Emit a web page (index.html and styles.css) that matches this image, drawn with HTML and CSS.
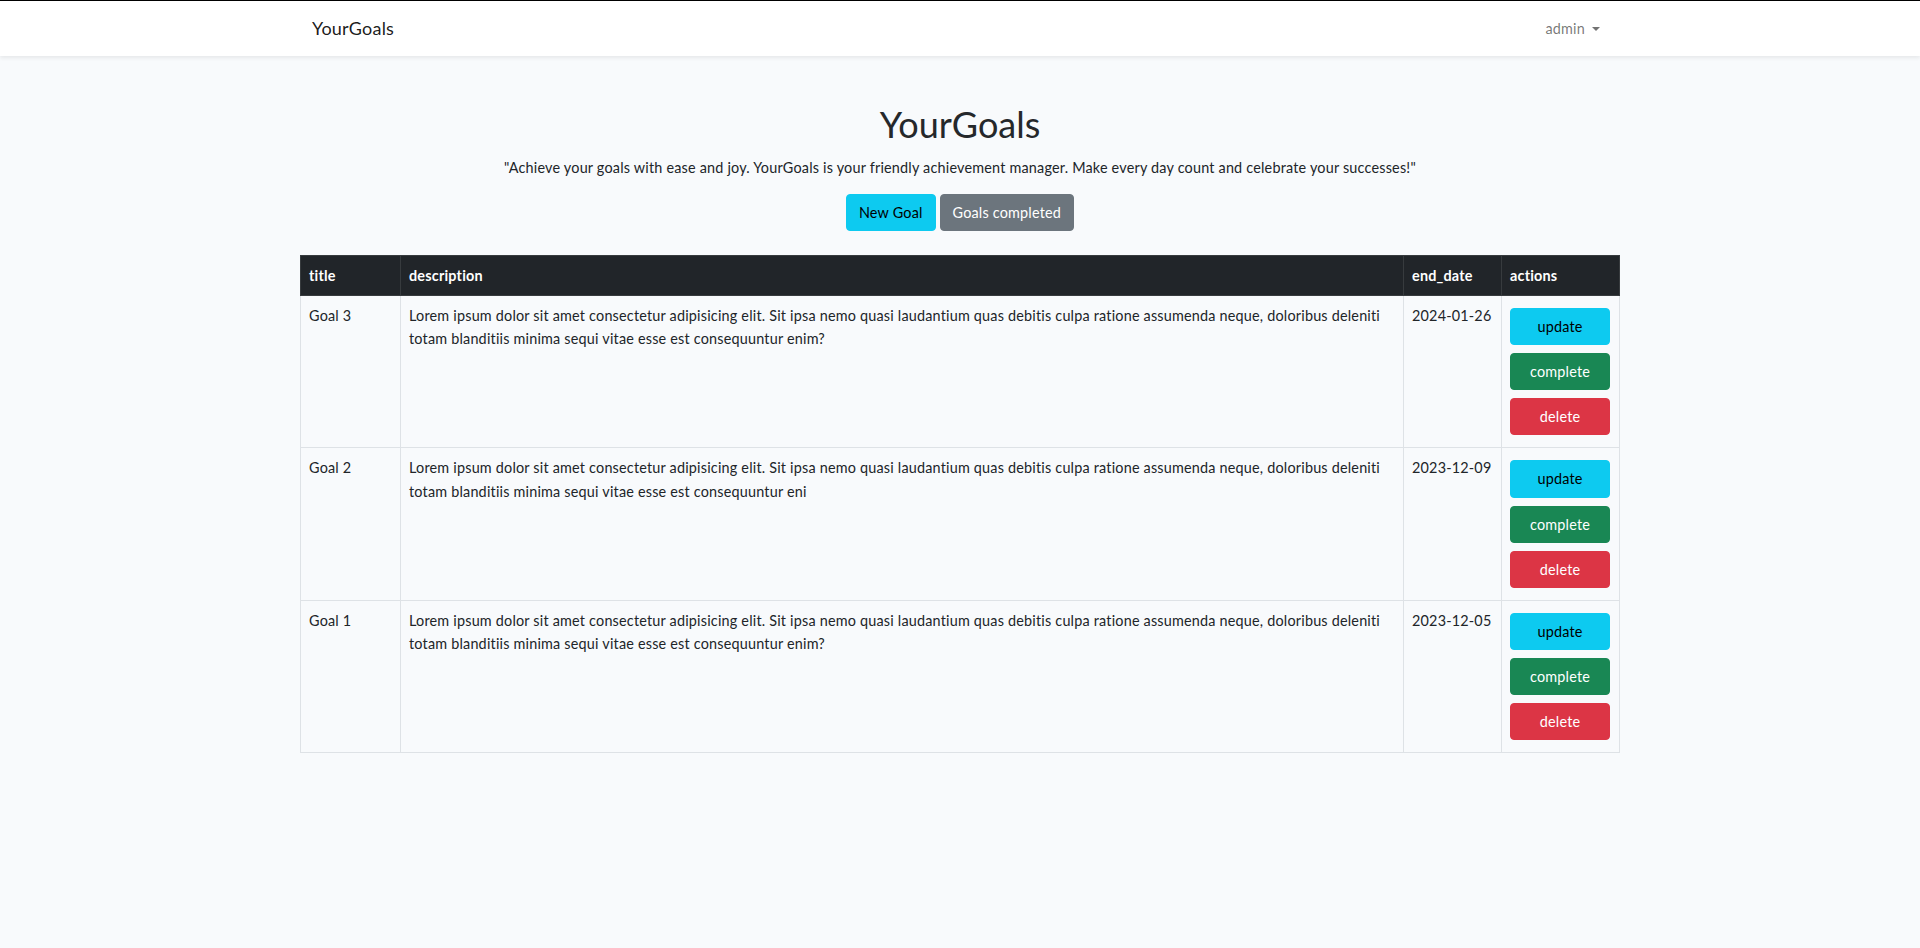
FILE: index.html
```html
<!DOCTYPE html>
<html lang="en">
<head>
<meta charset="utf-8">
<title>YourGoals</title>
<link rel="stylesheet" href="styles.css">
</head>
<body>
<nav class="navbar">
  <div class="container nav-inner">
    <a class="brand" href="#">YourGoals</a>
    <a class="user-menu" href="#">admin <span class="caret"></span></a>
  </div>
</nav>
<main class="container main">
  <header class="hero">
    <h1 class="hero-title">YourGoals</h1>
    <p class="hero-text">"Achieve your goals with ease and joy. YourGoals is your friendly achievement manager. Make every day count and celebrate your successes!"</p>
    <div class="hero-actions">
      <a class="btn btn-info" href="#">New Goal</a>
      <a class="btn btn-secondary" href="#">Goals completed</a>
    </div>
  </header>
  <table class="goals">
    <colgroup>
      <col class="col-title">
      <col class="col-desc">
      <col class="col-date">
      <col class="col-actions">
    </colgroup>
    <thead>
      <tr><th>title</th><th>description</th><th>end_date</th><th>actions</th></tr>
    </thead>
    <tbody>
      <tr>
        <td>Goal 3</td>
        <td>Lorem ipsum dolor sit amet consectetur adipisicing elit. Sit ipsa nemo quasi laudantium quas debitis culpa ratione assumenda neque, doloribus deleniti totam blanditiis minima sequi vitae esse est consequuntur enim?</td>
        <td>2024-01-26</td>
        <td>
          <div class="action-stack">
            <a class="btn btn-info" href="#">update</a>
            <a class="btn btn-success" href="#">complete</a>
            <a class="btn btn-danger" href="#">delete</a>
          </div>
        </td>
      </tr>
      <tr>
        <td>Goal 2</td>
        <td>Lorem ipsum dolor sit amet consectetur adipisicing elit. Sit ipsa nemo quasi laudantium quas debitis culpa ratione assumenda neque, doloribus deleniti totam blanditiis minima sequi vitae esse est consequuntur eni</td>
        <td>2023-12-09</td>
        <td>
          <div class="action-stack">
            <a class="btn btn-info" href="#">update</a>
            <a class="btn btn-success" href="#">complete</a>
            <a class="btn btn-danger" href="#">delete</a>
          </div>
        </td>
      </tr>
      <tr>
        <td>Goal 1</td>
        <td>Lorem ipsum dolor sit amet consectetur adipisicing elit. Sit ipsa nemo quasi laudantium quas debitis culpa ratione assumenda neque, doloribus deleniti totam blanditiis minima sequi vitae esse est consequuntur enim?</td>
        <td>2023-12-05</td>
        <td>
          <div class="action-stack">
            <a class="btn btn-info" href="#">update</a>
            <a class="btn btn-success" href="#">complete</a>
            <a class="btn btn-danger" href="#">delete</a>
          </div>
        </td>
      </tr>
    </tbody>
  </table>
</main>
</body>
</html>
```
FILE: styles.css
```css
* { box-sizing: border-box; }
html, body { margin: 0; padding: 0; }
body {
  background: #f8fafc;
  color: #212529;
  font-family: "Lato", "Noto Sans", sans-serif;
  font-size: 14.4px;
  line-height: 1.6;
  letter-spacing: 0.2px;
  min-height: 948px;
}
a { text-decoration: none; }
.container {
  width: 1320px;
  margin: 0 auto;
  padding: 0 12px;
}
.navbar {
  background: #fff;
  border-top: 1px solid #000;
  height: 56px;
  box-shadow: 0 2px 4px rgba(0,0,0,.075);
}
.nav-inner {
  height: 55px;
  display: flex;
  align-items: center;
  justify-content: space-between;
}
.brand {
  color: rgba(0,0,0,.9);
  font-size: 18px;
}
.user-menu {
  color: rgba(0,0,0,.55);
  padding: 8px;
  display: flex;
  align-items: center;
  gap: 7px;
}
.caret {
  width: 0; height: 0;
  border-left: 4.3px solid transparent;
  border-right: 4.3px solid transparent;
  border-top: 4.3px solid rgba(0,0,0,.55);
  margin-top: 1px;
}
.main { padding-top: 47px; }
.hero { text-align: center; }
.hero-title {
  font-size: 36px;
  font-weight: 400;
  line-height: 1.2;
  letter-spacing: 0;
  color: #25282b;
  margin: 0 0 10px;
}
.hero-text { margin: 0 0 15px; }
.hero-actions { margin-bottom: 24px; }
.btn {
  display: inline-block;
  padding: 6px 12px;
  border: 1px solid transparent;
  border-radius: 4px;
  font-size: 14.4px;
  line-height: 1.6;
  text-align: center;
}
.btn-info { background: #0dcaf0; border-color: #0dcaf0; color: #000; }
.btn-secondary { background: #6c757d; border-color: #6c757d; color: #fff; }
.btn-success { background: #198754; border-color: #198754; color: #fff; }
.btn-danger { background: #dc3545; border-color: #dc3545; color: #fff; }
.action-stack {
  display: flex;
  flex-direction: column;
  gap: 8px;
  width: 100px;
  margin: 4px 0;
}
.goals {
  width: 1320px;
  margin: 0 -12px;
  border-collapse: collapse;
  table-layout: fixed;
}
.col-title { width: 100px; }
.col-date { width: 98px; }
.col-actions { width: 118px; }
.goals th, .goals td {
  border: 1px solid #dee2e6;
  padding: 8px;
  text-align: left;
  vertical-align: top;
}
.goals th {
  background: #212529;
  color: #fff;
  border-color: #373b3e;
  font-weight: 700;
}
```
